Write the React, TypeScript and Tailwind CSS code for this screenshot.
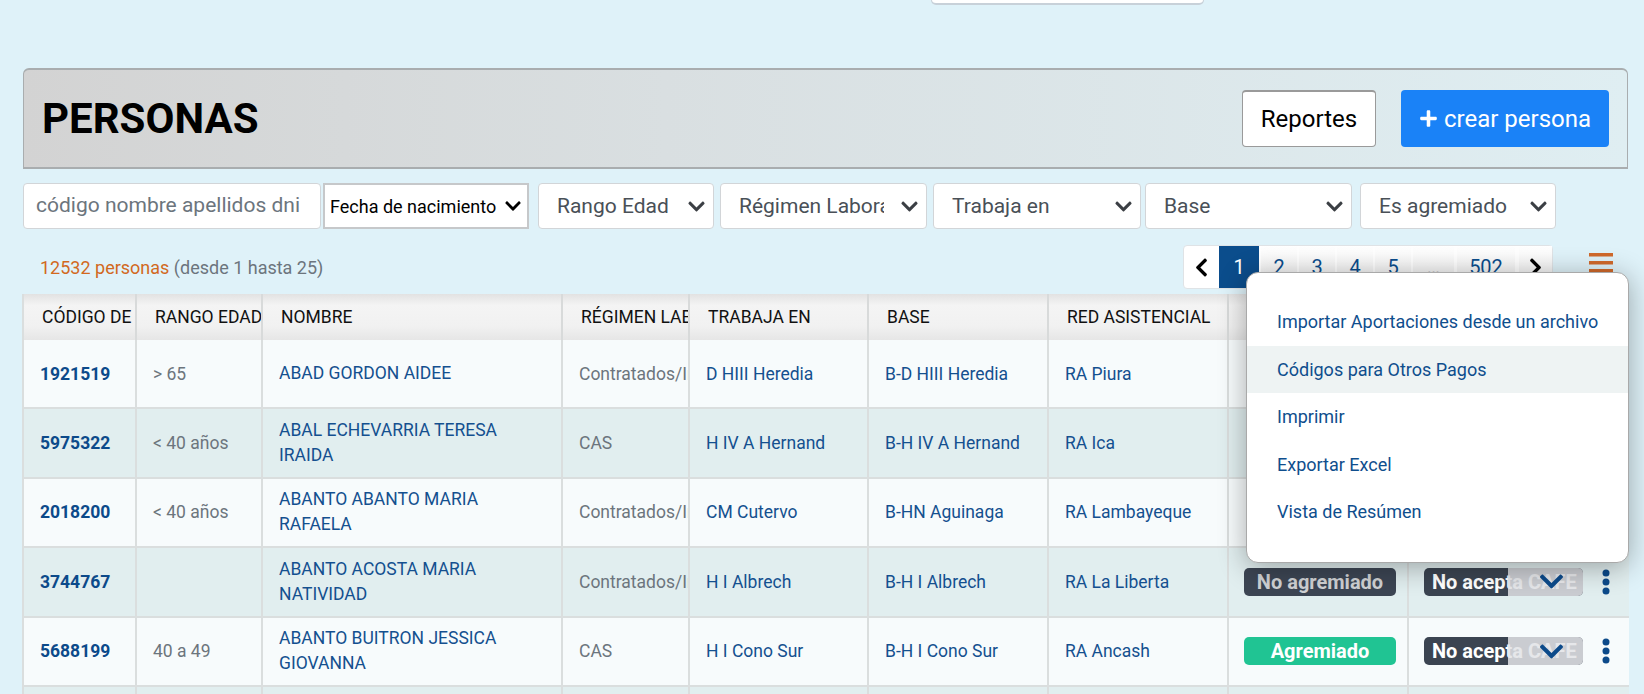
import React from "react";
import { FaChevronDown, FaChevronLeft, FaChevronRight, FaPlus } from "react-icons/fa";

type Row = {
  code: string;
  range: string;
  name: string;
  reg: string;
  work: string;
  base: string;
  red: string;
  agr?: "no" | "si";
};

const rows: Row[] = [
  { code: "1921519", range: "> 65", name: "ABAD GORDON AIDEE", reg: "Contratados/Indeterminados", work: "D HIII Heredia", base: "B-D HIII Heredia", red: "RA Piura" },
  { code: "5975322", range: "< 40 años", name: "ABAL ECHEVARRIA TERESA IRAIDA", reg: "CAS", work: "H IV A Hernand", base: "B-H IV A Hernand", red: "RA Ica" },
  { code: "2018200", range: "< 40 años", name: "ABANTO ABANTO MARIA RAFAELA", reg: "Contratados/Indeterminados", work: "CM Cutervo", base: "B-HN Aguinaga", red: "RA Lambayeque" },
  { code: "3744767", range: "", name: "ABANTO ACOSTA MARIA NATIVIDAD", reg: "Contratados/Indeterminados", work: "H I Albrech", base: "B-H I Albrech", red: "RA La Liberta", agr: "no" },
  { code: "5688199", range: "40 a 49", name: "ABANTO BUITRON JESSICA GIOVANNA", reg: "CAS", work: "H I Cono Sur", base: "B-H I Cono Sur", red: "RA Ancash", agr: "si" },
  { code: "4412876", range: "50 a 59", name: "ABANTO CASTILLO ROSA", reg: "CAS", work: "H II Chocope", base: "B-H II Chocope", red: "RA La Liberta" },
];

const COLS = "grid grid-cols-[113px_126px_300px_127px_179px_180px_180px_180px_220px]";

function Select({ label, cls }: { label: string; cls: string }) {
  return (
    <div className={`relative flex items-center h-[46px] bg-white border border-[#d2d5d8] rounded-[4px] pl-[18px] pr-[42px] ${cls}`}>
      <span className="flex-1 overflow-hidden whitespace-nowrap text-[21px] text-[#495057] leading-[28px]">{label}</span>
      <FaChevronDown className="absolute right-[7px] top-[13px] text-[#3b3f44]" size={19} />
    </div>
  );
}

function Kebab() {
  return (
    <svg width="8" height="26" viewBox="0 0 8 26" className="shrink-0">
      <circle cx="4" cy="4" r="3.5" fill="#0c4a8a" />
      <circle cx="4" cy="13" r="3.5" fill="#0c4a8a" />
      <circle cx="4" cy="22" r="3.5" fill="#0c4a8a" />
    </svg>
  );
}

export default function App() {
  return (
    <div className="h-[694px] overflow-hidden bg-[#dff2f9] font-[Roboto,sans-serif]">
      <div className="ml-[931px] w-[273px] h-[5px] bg-white border-x border-b-2 border-[#c8d1d9] rounded-b-[5px]" />

      <div className="ml-[23px] w-[1605px]">
        {/* Header panel */}
        <div className="mt-[63px] h-[101px] flex items-center justify-between pl-[18px] pr-[18px] border-t-2 border-b-2 border-x border-[#a9adaf] rounded-t-[6px] bg-[linear-gradient(90deg,#d3d3d3,#d9dfe1_40%,#dfeef2)]">
          <h1 className="text-[42px] font-bold text-black leading-none">PERSONAS</h1>
          <div className="flex items-center">
            <button className="h-[57px] w-[134px] bg-white border border-[#9a9a9a] border-t-2 rounded-[4px] text-[24px] text-black">
              Reportes
            </button>
            <button className="ml-[25px] h-[57px] w-[208px] bg-[#1a82f7] rounded-[4px] text-[24px] text-white flex items-center justify-center">
              <FaPlus size={19} className="mr-[6px]" />
              crear persona
            </button>
          </div>
        </div>

        {/* Filters */}
        <div className="mt-[14px] flex items-center">
          <div className="h-[46px] w-[298px] bg-white border border-[#d2d5d8] rounded-[4px] pl-[12px] flex items-center text-[21px] text-[#6c757d] whitespace-nowrap">
            código nombre apellidos dni
          </div>
          <div className="ml-[2px] h-[46px] w-[206px] bg-white border-2 border-[#c6c8ca] pl-[5px] pr-[5px] flex items-center">
            <span className="flex-1 text-[18px] text-black whitespace-nowrap">Fecha de nacimiento</span>
            <FaChevronDown className="text-black shrink-0" size={18} />
          </div>
          <Select label="Rango Edad" cls="ml-[9px] w-[176px]" />
          <Select label="Régimen Laboral" cls="ml-[6px] w-[207px]" />
          <Select label="Trabaja en" cls="ml-[6px] w-[208px]" />
          <Select label="Base" cls="ml-[4px] w-[207px]" />
          <Select label="Es agremiado" cls="ml-[8px] w-[196px]" />
        </div>

        {/* Count + pagination */}
        <div className="relative mt-[16px] h-[44px] flex items-center">
          <div className="pl-[17px] text-[18px] whitespace-nowrap">
            <span className="text-[#d2691e]">12532 personas</span>{" "}
            <span className="text-[#6c757d]">(desde 1 hasta 25)</span>
          </div>
          <div className="ml-auto flex h-[44px] bg-white border border-[#dfe3e6] rounded-[4px] text-[20px] text-[#0b4d8c]">
            <div className="w-[35px] flex items-center justify-center text-black">
              <FaChevronLeft size={21} />
            </div>
            <div className="w-[40px] flex items-center justify-center bg-[#0b4d8c] text-white">1</div>
            {["2", "3", "4", "5"].map((p) => (
              <div key={p} className="ml-[2px] w-[36px] flex items-center justify-center bg-[linear-gradient(#ffffff,#ededed)]">
                {p}
              </div>
            ))}
            <div className="ml-[2px] w-[41px] flex items-end justify-center pb-[8px] bg-[linear-gradient(#ffffff,#ededed)] text-[#b9bcbf] text-[16px]">
              ...
            </div>
            <div className="ml-[3px] w-[58px] flex items-center justify-center bg-[linear-gradient(#ffffff,#ededed)]">502</div>
            <div className="ml-[4px] w-[33px] flex items-center justify-center text-black bg-[linear-gradient(#ffffff,#ededed)]">
              <FaChevronRight size={21} />
            </div>
          </div>
          <svg width="24" height="22" viewBox="0 0 24 22" className="ml-[36px] mr-[15px] self-start mt-[8px]">
            <rect x="0" y="0" width="24" height="3.5" fill="#d0692b" />
            <rect x="0" y="8" width="24" height="3.5" fill="#d0692b" />
            <rect x="0" y="16" width="24" height="3.5" fill="#d0692b" />
          </svg>

          {/* Dropdown menu */}
          <div className="absolute z-10 top-[27px] right-[-1px] w-[383px] h-[291px] bg-white border border-[#a9a9a9] rounded-[12px] shadow-[0_4px_28px_rgba(0,0,0,0.32)] pt-[25px] overflow-hidden text-[18px] text-[#0f4e8d]">
            <div className="h-[47.5px] flex items-center pl-[30px]">Importar Aportaciones desde un archivo</div>
            <div className="h-[47.5px] flex items-center pl-[30px] bg-[#eef3f3]">Códigos para Otros Pagos</div>
            <div className="h-[47.5px] flex items-center pl-[30px]">Imprimir</div>
            <div className="h-[47.5px] flex items-center pl-[30px]">Exportar Excel</div>
            <div className="h-[47.5px] flex items-center pl-[30px]">Vista de Resúmen</div>
          </div>
        </div>
      </div>

      {/* Table */}
      <div className="ml-[22px] w-[1607px] mt-[5px] border-l-2 border-[#dadede]">
        <div className={`${COLS} h-[46px] bg-[linear-gradient(#e2e2e2,#f4f4f4_25%,#f1f1f1_70%,#e6e6e6)] text-[17.5px] text-[#111]`}>
          {["CÓDIGO DE PERSONA", "RANGO EDAD", "NOMBRE", "RÉGIMEN LABORAL", "TRABAJA EN", "BASE", "RED ASISTENCIAL", "AGREMIADO", "CAFE"].map((h, i) => (
            <div key={i} className={`flex items-center pl-[18px] overflow-hidden whitespace-nowrap ${i < 8 ? "border-r-2 border-[#d8dada]" : ""}`}>
              {h}
            </div>
          ))}
        </div>
        {rows.map((r, idx) => (
          <div
            key={r.code}
            className={`${COLS} h-[69.4px] border-b-2 border-[#dadede] text-[17.5px] ${idx % 2 === 0 ? "bg-[#f7fbfc]" : "bg-[#e1eeef]"}`}
          >
            <div className="flex items-center pl-[16px] border-r-2 border-[#dadede] overflow-hidden font-bold text-[#0c4a8a]">{r.code}</div>
            <div className="flex items-center pl-[16px] border-r-2 border-[#dadede] overflow-hidden whitespace-nowrap text-[#6c757d]">{r.range}</div>
            <div className="flex items-center pl-[16px] pr-[16px] border-r-2 border-[#dadede] overflow-hidden text-[#14508f] leading-[25px]">{r.name}</div>
            <div className="flex items-center pl-[16px] border-r-2 border-[#dadede] overflow-hidden whitespace-nowrap text-[#6c757d]">{r.reg}</div>
            <div className="flex items-center pl-[16px] border-r-2 border-[#dadede] overflow-hidden whitespace-nowrap text-[#14508f]">{r.work}</div>
            <div className="flex items-center pl-[16px] border-r-2 border-[#dadede] overflow-hidden whitespace-nowrap text-[#14508f]">{r.base}</div>
            <div className="flex items-center pl-[16px] border-r-2 border-[#dadede] overflow-hidden whitespace-nowrap text-[#14508f]">{r.red}</div>
            <div className="flex items-center pl-[15px] border-r-2 border-[#dadede] overflow-hidden">
              {r.agr === "no" && (
                <span className="w-[152px] h-[28px] rounded-[5px] bg-[#3c4553] text-[#cfd1d3] font-bold text-[20px] flex items-center justify-center">
                  No agremiado
                </span>
              )}
              {r.agr === "si" && (
                <span className="w-[152px] h-[28px] rounded-[5px] bg-[#20c493] text-white font-bold text-[20px] flex items-center justify-center">
                  Agremiado
                </span>
              )}
            </div>
            <div className="flex items-center pl-[15px] overflow-hidden">
              {r.agr && (
                <>
                  <span className="relative w-[159px] h-[28px] rounded-[5px] bg-[#3b4451] text-white font-bold text-[20px] pl-[8px] flex items-center whitespace-nowrap overflow-hidden">
                    No acepta CAFE
                    <span className="absolute right-0 top-0 bottom-0 w-[75px] bg-[rgba(226,227,230,0.86)] flex items-center pl-[30px]">
                      <FaChevronDown className="text-[#0c4a8a]" size={27} />
                    </span>
                  </span>
                  <span className="ml-[19px] flex items-center">
                    <Kebab />
                  </span>
                </>
              )}
            </div>
          </div>
        ))}
      </div>
    </div>
  );
}
